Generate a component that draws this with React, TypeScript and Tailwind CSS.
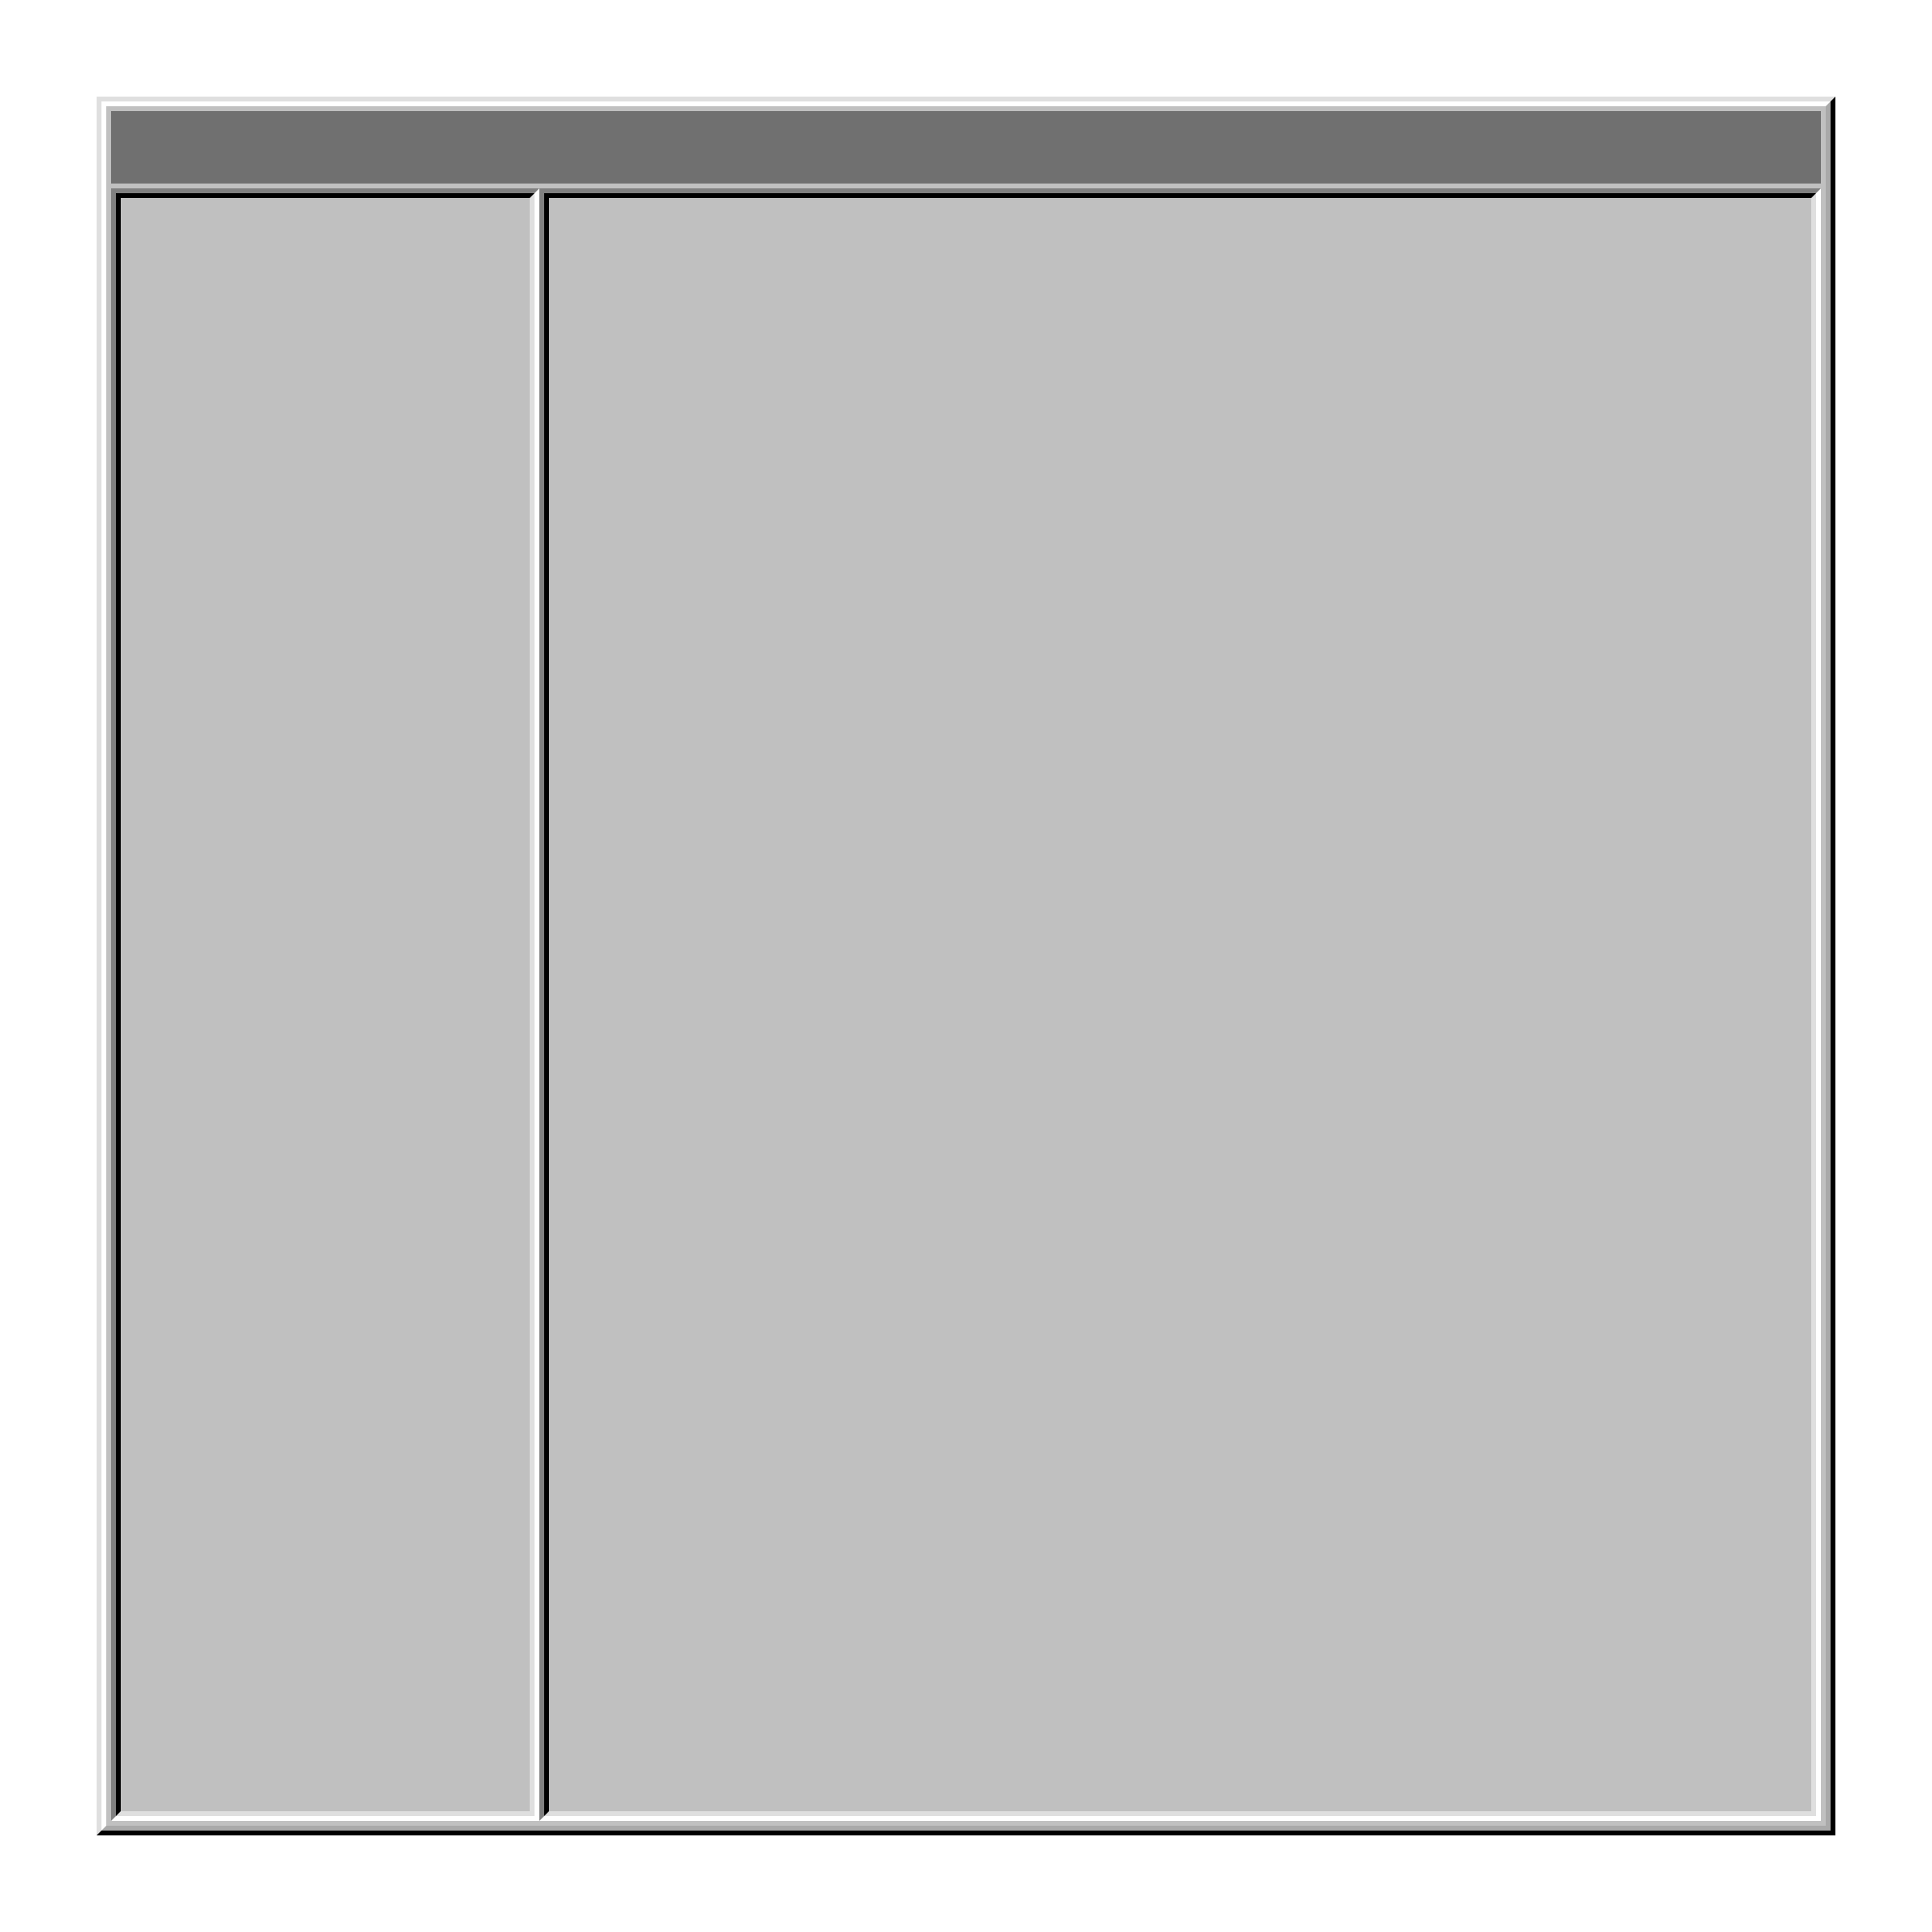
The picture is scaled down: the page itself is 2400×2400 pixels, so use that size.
import React from "react";

function Sunken({ className }: { className: string }) {
  return (
    <div
      className={`${className} border-[6px] border-t-[#808080] border-l-[#808080] border-r-white border-b-white`}
    >
      <div className="h-full w-full border-[6px] border-t-black border-l-black border-r-[#dfdfdf] border-b-[#dfdfdf] bg-[#c0c0c0]" />
    </div>
  );
}

export default function App() {
  return (
    <div className="min-h-[2400px] bg-white p-[120px]">
      <div className="w-[2160px] h-[2160px] border-[6px] border-t-[#dfdfdf] border-l-[#dfdfdf] border-r-black border-b-black">
        <div className="h-full w-full border-[6px] border-t-white border-l-white border-r-[#a9a9a9] border-b-[#a9a9a9] bg-[#c0c0c0] p-[6px] flex flex-col gap-[6px]">
          <div className="h-[90px] shrink-0 bg-[#707070]" />
          <div className="flex flex-1 min-h-0">
            <Sunken className="w-[532px] shrink-0 h-full" />
            <Sunken className="flex-1 h-full" />
          </div>
        </div>
      </div>
    </div>
  );
}
